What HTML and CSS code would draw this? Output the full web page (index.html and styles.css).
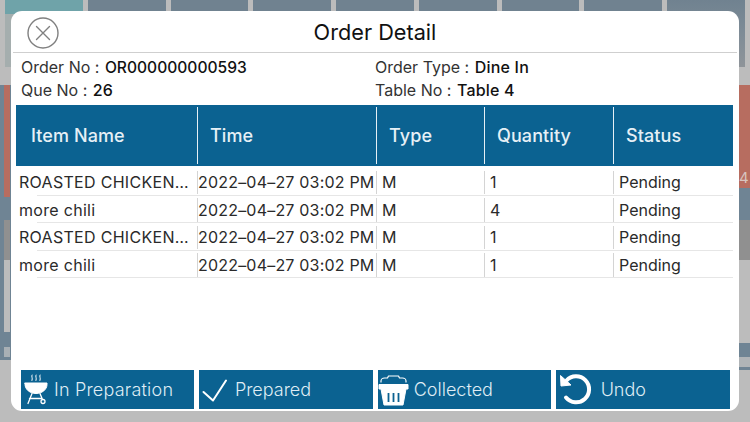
FILE: index.html
```html
<!DOCTYPE html>
<html lang="en">
<head>
<meta charset="utf-8">
<title>Order Detail</title>
<link rel="stylesheet" href="styles.css">
</head>
<body>
<div class="backdrop">
  <div class="tiles">
    <div class="tile tile-teal"></div><div class="tile"></div><div class="tile"></div><div class="tile"></div><div class="tile"></div><div class="tile"></div><div class="tile"></div><div class="tile"></div><div class="tile tile-fade"></div>
  </div>
  <div class="strips">
    <div class="strip strip-left">
      <div class="seg seg-red-l"></div>
      <div class="seg seg-slate-l"></div>
      <div class="seg seg-dark-l"></div>
      <div class="seg seg-light-l"></div>
      <div class="seg seg-slate-l2"></div>
      <div class="seg seg-pale-l"></div>
    </div>
    <div class="strip strip-right">
      <div class="seg seg-red-r"><span class="stray">4</span></div>
      <div class="seg seg-slate-r"></div>
      <div class="seg seg-dark-r"></div>
      <div class="seg seg-light-r"></div>
      <div class="seg seg-slate-r2"></div>
      <div class="seg seg-pale-r"></div>
      <div class="seg seg-slate-r3"></div>
    </div>
  </div>
</div>

<main class="modal">
  <header class="modal-head">
    <svg class="close" viewBox="0 0 32 32" width="32" height="32" fill="none" stroke="#808080" stroke-linecap="round">
      <circle cx="16" cy="16" r="15" stroke-width="1.4"/>
      <path d="M9.500 9.500 22.500 22.500M22.500 9.500 9.500 22.500" stroke-width="1.4"/>
    </svg>
    <h1 class="title">Order Detail</h1>
  </header>

  <section class="info">
    <p>Order No : <b class="code">OR000000000593</b></p>
    <p>Order Type : <b>Dine In</b></p>
    <p>Que No : <b>26</b></p>
    <p>Table No : <b>Table 4</b></p>
  </section>

  <section class="table">
    <div class="thead">
      <div class="th">Item Name</div>
      <div class="th">Time</div>
      <div class="th">Type</div>
      <div class="th">Quantity</div>
      <div class="th">Status</div>
    </div>
    <div class="row">
      <div class="td td-name">ROASTED CHICKEN…</div><div class="td td-time">2022–04–27 03:02 PM</div><div class="td">M</div><div class="td">1</div><div class="td">Pending</div>
    </div>
    <div class="row">
      <div class="td td-name">more chili</div><div class="td td-time">2022–04–27 03:02 PM</div><div class="td">M</div><div class="td">4</div><div class="td">Pending</div>
    </div>
    <div class="row">
      <div class="td td-name">ROASTED CHICKEN…</div><div class="td td-time">2022–04–27 03:02 PM</div><div class="td">M</div><div class="td">1</div><div class="td">Pending</div>
    </div>
    <div class="row">
      <div class="td td-name">more chili</div><div class="td td-time">2022–04–27 03:02 PM</div><div class="td">M</div><div class="td">1</div><div class="td">Pending</div>
    </div>
  </section>

  <footer class="actions">
    <button class="btn">
      <svg class="icon" viewBox="0 0 32 39" width="32" height="39" fill="none" stroke="#fff" stroke-linecap="round">
        <path d="M11 5c-1 1.200 1 3 0 5.500M15 5c-1 1.200 1 3 0 5.500M19 5c-1 1.200 1 3 0 5.500" stroke-width="1"/>
        <path d="M4 13H26V14.500C26 19.500 21 23.500 15 23.500S4 19.500 4 14.500Z" fill="#fff" stroke-width="1"/>
        <path d="M11 23.500 7 33.500M8.500 28.500H20M19 23.500 21.500 29.500" stroke-width="1.300"/>
        <circle cx="22" cy="31.500" r="2" stroke-width="1.300"/>
      </svg>
      <span class="btn-wide">In Preparation</span>
    </button>
    <button class="btn">
      <svg class="icon" viewBox="0 0 32 39" width="32" height="39" fill="none" stroke="#fff" stroke-linecap="round" stroke-linejoin="round">
        <path d="M4.500 22 14 30.500 27 10.500" stroke-width="2"/>
      </svg>
      <span>Prepared</span>
    </button>
    <button class="btn">
      <svg class="icon" viewBox="0 0 32 39" width="32" height="39" fill="none" stroke="#fff" stroke-linejoin="round">
        <path d="M3 12.500V11C3 9.500 4.500 8 6.500 8H9.500L10.500 6H20.500L21.500 8H24.500C26.500 8 28 9.500 28 11V12.500" stroke-width="1.200"/>
        <path d="M1 14.500H30V19H1Z" fill="#fff" stroke-width="1"/>
        <path d="M3 19H28L25 35H6Z" fill="#fff" stroke-width="1"/>
        <path d="M10.500 23V32M15.500 23V32M20.500 23V32" stroke="#0b6291" stroke-width="1.800"/>
      </svg>
      <span>Collected</span>
    </button>
    <button class="btn">
      <svg class="icon" viewBox="0 0 36 39" width="36" height="39" fill="none" stroke="#fff">
        <path d="M10.500 10.500A13 13 0 1 1 10 27.500" stroke-width="4" stroke-linecap="round"/>
        <path d="M4.500 5.500 5 16 15 15Z" fill="#fff" stroke-width="1" stroke-linejoin="round"/>
      </svg>
      <span>Undo</span>
    </button>
  </footer>
</main>
</body>
</html>
```

FILE: styles.css
```css
* {
  box-sizing: border-box;
}

html,
body {
  margin: 0;
  height: 100%;
}

body {
  width: 750px;
  height: 422px;
  position: relative;
  overflow: hidden;
  background: #bcbcbc;
  font-family: Inter, "Liberation Sans", sans-serif;
  color: #1c1c1c;
}

/* Dimmed page behind the dialog */
.backdrop {
  display: flex;
  flex-direction: column;
  height: 100%;
}

.tiles {
  display: flex;
  gap: 5px;
  height: 67px;
  padding: 0 5px;
  margin-bottom: 18px;
  flex: none;
}

.tile {
  flex: 1;
  background: #708290;
}

.tile-teal {
  background: linear-gradient(#6fa3a9 0, #6fa3a9 14px, #a5aeae 14px);
}

.tile-fade {
  background: linear-gradient(#708290 0, #7d8b96 45%, #8f9499 100%);
}

.strips {
  display: flex;
  justify-content: space-between;
  flex: 1;
}

.strip {
  display: flex;
  flex-direction: column;
  width: 11px;
}

.strip-left {
  align-self: flex-start;
  height: 275px;
  background: #6f8494;
  padding-left: 4px;
  padding-right: 1px;
}

.seg {
  flex: none;
}

.seg-red-l { height: 112px; background: #b76d60; }
.seg-slate-l { height: 23px; }
.seg-dark-l { height: 40px; background: #909090; }
.seg-light-l { height: 72px; background: #bcbcbc; }
.seg-slate-l2 { height: 15px; }
.seg-pale-l { height: 10px; background: #a9b0b5; }

.seg-red-r {
  position: relative;
  height: 103px;
  background: #b76d60;
}

.stray {
  position: absolute;
  left: 0;
  top: 83.500px;
  font-size: 15px;
  line-height: 18px;
  color: #d8c4bf;
}

.seg-slate-r { height: 32px; background: #6f8494; }
.seg-dark-r { height: 40px; background: #909090; }
.seg-light-r { height: 83px; }
.seg-slate-r2 { height: 14px; background: #6f8494; }
.seg-pale-r { height: 10px; background: #b0b4b7; }
.seg-slate-r3 { height: 3px; background: #6f8494; }

/* Dialog */
.modal {
  position: absolute;
  left: 11px;
  top: 11px;
  width: 728px;
  height: 400px;
  display: flex;
  flex-direction: column;
  background: #fff;
  border-radius: 11px;
}

.modal-head {
  display: flex;
  align-items: center;
  justify-content: center;
  position: relative;
  height: 42px;
  flex: none;
  margin: 0 2px;
  border-bottom: 1px solid #cfcfcf;
}

.close {
  position: absolute;
  left: 13.500px;
  top: 5.500px;
}

.title {
  margin: 0;
  font-size: 21.700px;
  font-weight: 400;
  color: #111;
}

.info {
  display: grid;
  grid-template-columns: 354px 1fr;
  grid-auto-rows: 23px;
  padding: 3px 0 0 10px;
  flex: none;
  height: 52px;
  font-size: 16px;
  line-height: 23px;
  color: #333;
}

.info p {
  margin: 0;
  white-space: nowrap;
}

.info b {
  margin-left: 1px;
  font-weight: 500;
  font-size: 16px;
  letter-spacing: 0.200px;
  color: #111;
}

.info .code {
  font-size: 15.600px;
  letter-spacing: 0;
}

.table {
  margin: 0 6px 0 5px;
  flex: none;
}

.thead,
.row {
  display: grid;
  grid-template-columns: 181px 179px 108px 129px 1fr;
}

.thead {
  height: 61px;
  align-items: stretch;
  padding: 2px 0;
  margin-bottom: 2px;
  background: #0b6291;
}

.th {
  display: flex;
  align-items: center;
  padding-left: 12px;
  font-size: 18px;
  font-weight: 500;
  letter-spacing: 0.100px;
  color: #e6f0f6;
  border-left: 1px solid #e6f0f6;
}

.th:first-child {
  border-left: 0;
  padding-left: 15px;
}

.row {
  height: 27.500px;
  padding: 2.500px 0 1.500px;
  background: linear-gradient(#e6e6e6, #e6e6e6) no-repeat 21px 100% / calc(100% - 21px) 1px;
}

.td {
  display: flex;
  align-items: center;
  padding-left: 5px;
  border-left: 1px solid #d4d4d4;
  font-size: 16px;
  color: #2a2a2a;
  white-space: nowrap;
}

.td-name {
  border-left: 0;
  padding-left: 3px;
  letter-spacing: 0.300px;
}

.td-time {
  padding-left: 0;
  letter-spacing: 0.200px;
}

.actions {
  display: flex;
  gap: 5px;
  margin-top: auto;
  padding: 0 9.500px 2px 10px;
}

.btn {
  flex: 1;
  position: relative;
  display: flex;
  align-items: center;
  height: 39px;
  padding: 0;
  border: 0;
  background: #0b6291;
  color: #dfecf4;
  font: inherit;
  font-size: 18px;
  font-weight: 300;
}

.btn span {
  position: absolute;
  top: 9px;
  line-height: 22px;
}

.btn .btn-wide {
  letter-spacing: 0.200px;
}

.btn:nth-child(1) span { left: 33px; }
.btn:nth-child(2) span { left: 35.500px; }
.btn:nth-child(3) span { left: 36px; }
.btn:nth-child(4) span { left: 44.500px; }

.icon {
  flex: none;
}
```
